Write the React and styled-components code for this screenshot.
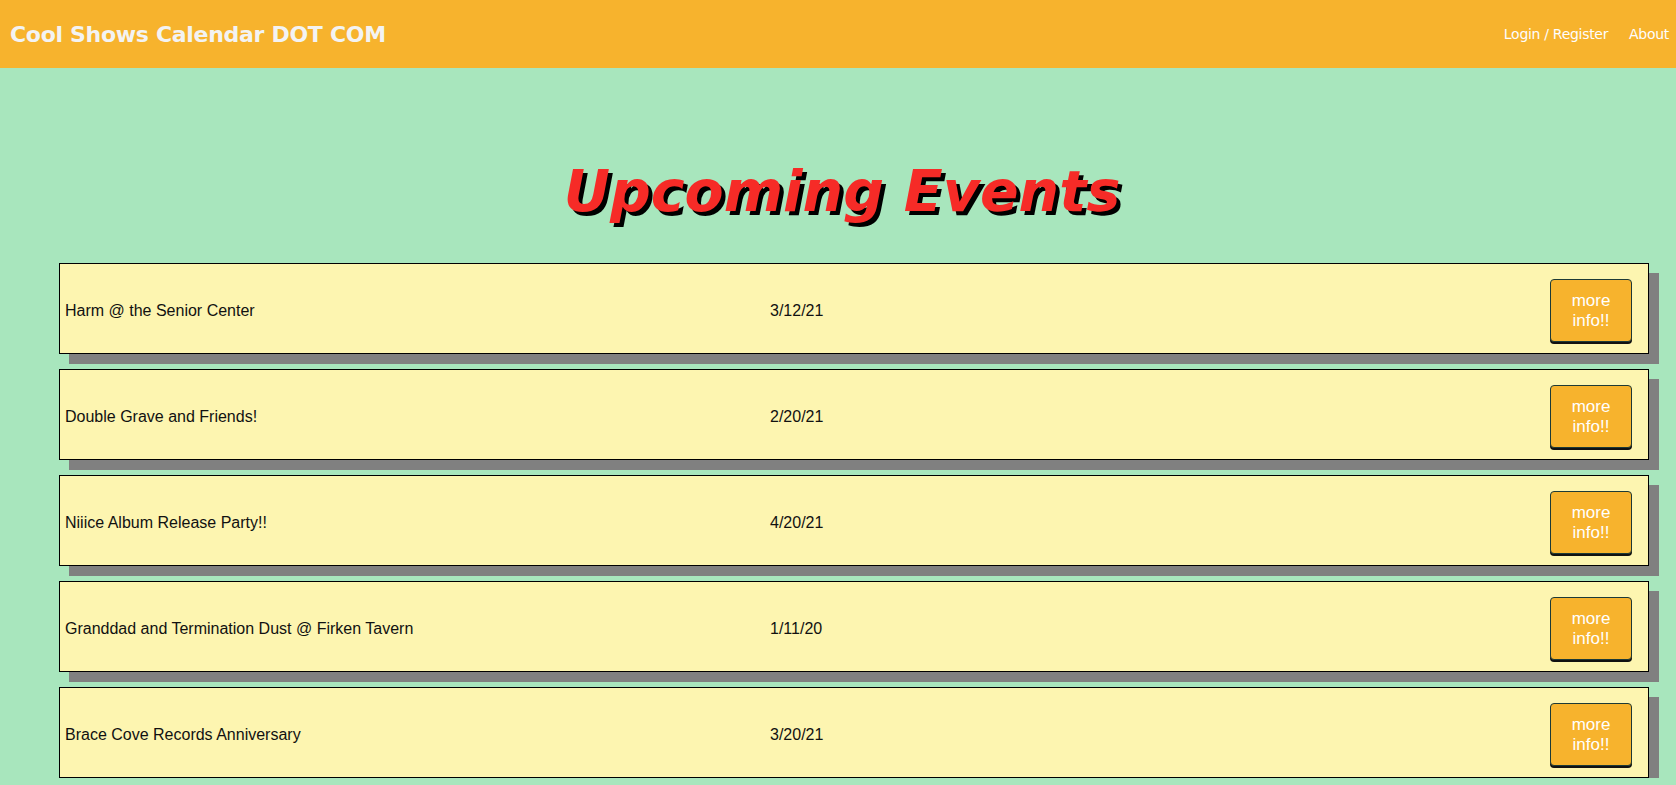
import React from 'react';
import styled, { createGlobalStyle } from 'styled-components';

const GlobalStyle = createGlobalStyle`
  body {
    margin: 0;
    font-family: 'Liberation Sans', Arial, sans-serif;
    background-color: #a8e6bd;
    color: #111;
  }
`;

const NavBar = styled.header`
  height: 68px;
  display: flex;
  align-items: center;
  justify-content: space-between;
  padding: 0 10px;
  background-color: #f7b32d;
`;

const Brand = styled.h1`
  margin: 0;
  font-family: 'DejaVu Sans', Verdana, sans-serif;
  font-size: 22px;
  font-weight: bold;
  color: #f3f3f3;
  letter-spacing: -0.3px;
`;

const NavLinks = styled.nav`
  display: flex;
  gap: 21px;
  margin-right: -3px;
`;

const NavLink = styled.a`
  font-family: 'DejaVu Sans', Verdana, sans-serif;
  font-size: 14px;
  letter-spacing: -0.3px;
  color: #fdfdfd;
  text-decoration: none;
  cursor: pointer;
`;

const Main = styled.main`
  display: flex;
  flex-direction: column;
  padding: 0 27px 0 59px;
`;

const Title = styled.h2`
  margin: 90px 0 39px;
  text-align: center;
  font-family: 'DejaVu Sans', Verdana, sans-serif;
  font-style: italic;
  font-weight: bold;
  font-size: 57px;
  color: #f62b27;
  text-shadow: 4px 4px 0 #000;
  transform: translateX(-12px);
`;

const EventList = styled.ul`
  list-style: none;
  margin: 0;
  padding: 0;
  display: flex;
  flex-direction: column;
  gap: 15px;
`;

const EventCard = styled.li`
  display: grid;
  grid-template-columns: 705px 1fr auto;
  align-items: center;
  height: 91px;
  box-sizing: border-box;
  padding: 0 16px 0 5px;
  background-color: #fdf5b0;
  border: 1px solid #000;
  box-shadow: 10px 10px 0 #808080;
  font-size: 16px;
`;

const EventName = styled.span`
  padding-top: 5px;
`;

const EventDate = styled.span`
  padding-top: 5px;
`;

const InfoButton = styled.button`
  width: 82px;
  height: 63px;
  margin-top: 4px;
  padding: 0 8px;
  background-color: #f7b32d;
  color: #fff;
  font-family: 'Liberation Sans', Arial, sans-serif;
  font-size: 17px;
  line-height: 20px;
  border: 1px solid #1d3a36;
  border-radius: 4px;
  box-shadow: 0 2px 0 #111;
  cursor: pointer;
`;

const events = [
  { name: 'Harm @ the Senior Center', date: '3/12/21' },
  { name: 'Double Grave and Friends!', date: '2/20/21' },
  { name: 'Niiice Album Release Party!!', date: '4/20/21' },
  { name: 'Granddad and Termination Dust @ Firken Tavern', date: '1/11/20' },
  { name: 'Brace Cove Records Anniversary', date: '3/20/21' },
];

const App = () => {
  return (
    <>
      <GlobalStyle />
      <NavBar>
        <Brand>Cool Shows Calendar DOT COM</Brand>
        <NavLinks>
          <NavLink>Login / Register</NavLink>
          <NavLink>About</NavLink>
        </NavLinks>
      </NavBar>
      <Main>
        <Title>Upcoming Events</Title>
        <EventList>
          {events.map((ev) => (
            <EventCard key={ev.name}>
              <EventName>{ev.name}</EventName>
              <EventDate>{ev.date}</EventDate>
              <InfoButton>more info!!</InfoButton>
            </EventCard>
          ))}
        </EventList>
      </Main>
    </>
  );
};

export default App;
